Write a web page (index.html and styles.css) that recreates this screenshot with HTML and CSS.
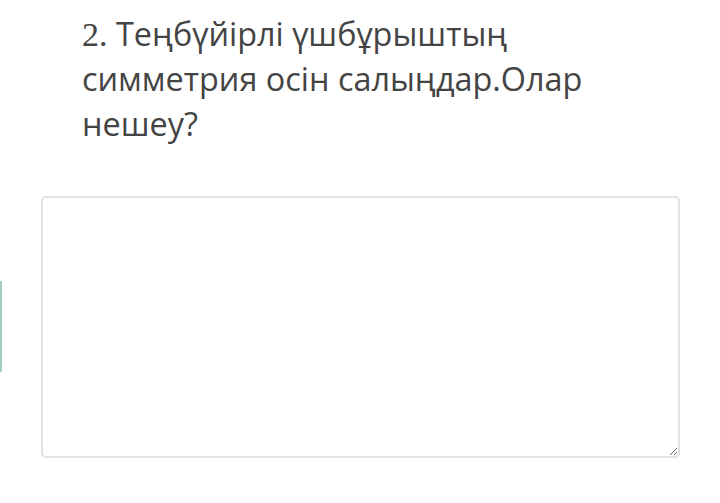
FILE: index.html
```html
<!DOCTYPE html>
<html>
<head>
<meta charset="utf-8">
<link rel="stylesheet" href="styles.css">
</head>
<body>
<div class="page">
  <div class="marker"></div>
  <div class="content">
    <h2 class="question"><span class="num">2.</span> Теңбүйірлі үшбұрыштың симметрия осін салыңдар.Олар нешеу?</h2>
    <textarea class="answer"></textarea>
  </div>
</div>
</body>
</html>
```
FILE: styles.css
```css
html, body {
  margin: 0;
  padding: 0;
  background: #fff;
}
.page {
  position: relative;
  width: 720px;
  height: 503px;
  overflow: hidden;
}
.marker {
  position: absolute;
  left: 0;
  top: 281px;
  width: 2px;
  height: 91px;
  background: #9fcfb6;
}
.content {
  padding: 11px 0 0 41px;
}
.question {
  margin: 0 0 0 41px;
  width: 545px;
  font-family: "Open Sans", sans-serif;
  font-weight: 400;
  font-size: 32.4px;
  line-height: 45px;
  color: #444;
}
.num {
  font-family: "Liberation Serif", serif;
  font-size: 34px;
  line-height: 1;
}
.answer {
  display: block;
  box-sizing: border-box;
  margin-top: 50px;
  width: 639px;
  height: 262px;
  border: 2px solid #e2e2e2;
  border-radius: 5px;
  background: #fff;
  resize: both;
}
```
